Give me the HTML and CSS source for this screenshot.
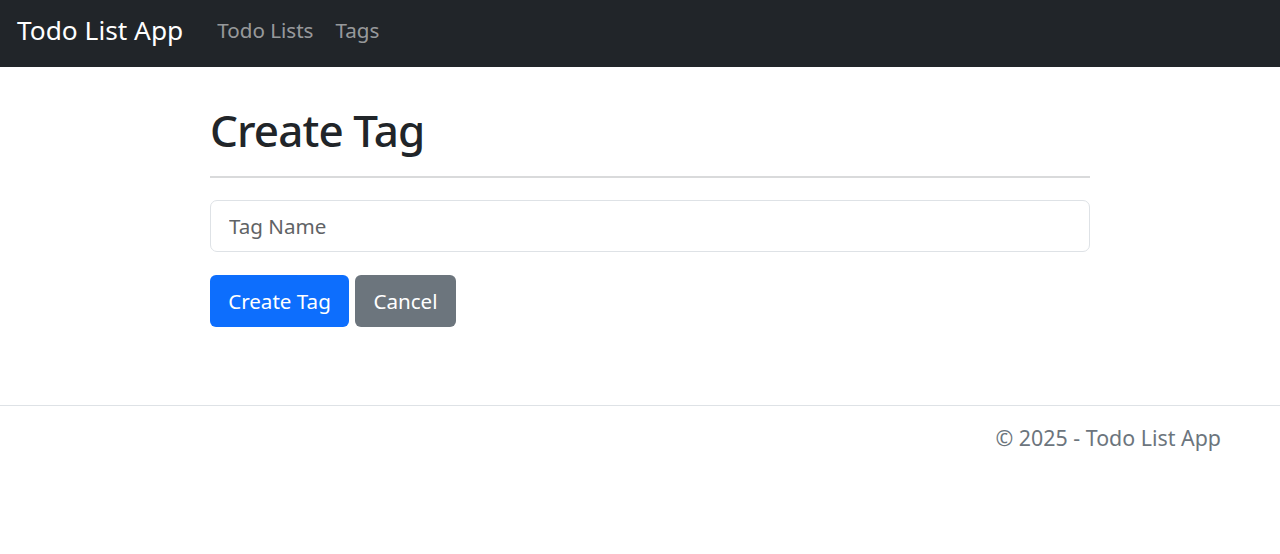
FILE: index.html
```html
<!DOCTYPE html>
<html lang="en">
<head>
<meta charset="utf-8">
<title>Create Tag - Todo List App</title>
<link rel="stylesheet" href="styles.css">
</head>
<body>
<header class="navbar">
  <a class="brand" href="#">Todo List App</a>
  <nav class="nav">
    <a class="nav-link" href="#">Todo Lists</a>
    <a class="nav-link" href="#">Tags</a>
  </nav>
</header>
<main class="container">
  <h1 class="title">Create Tag</h1>
  <hr class="divider">
  <form class="form">
    <input class="input" type="text" placeholder="Tag Name">
    <div class="actions">
      <button class="btn btn-primary" type="button">Create Tag</button>
      <button class="btn btn-secondary" type="button">Cancel</button>
    </div>
  </form>
</main>
<footer class="footer">
  <span class="footer-text">© 2025 - Todo List App</span>
</footer>
</body>
</html>
```

FILE: styles.css
```css
* { box-sizing: border-box; }
html, body { margin: 0; padding: 0; }
body {
  font-family: "Noto Sans", "Open Sans", sans-serif;
  font-size: 19.2px;
  color: #212529;
  background: #fff;
  width: 1280px;
  height: 554px;
  overflow: hidden;
}
.navbar {
  height: 67px;
  background: #212529;
  display: flex;
  align-items: center;
  padding: 0 17px 8px;
}
.brand {
  color: #fff;
  text-decoration: none;
  font-size: 26.3px;
  margin-right: 34px;
}
.nav { display: flex; gap: 22px; }
.nav-link {
  color: rgba(255, 255, 255, 0.55);
  text-decoration: none;
  font-size: 20.6px;
}
.container {
  margin-left: 210px;
  width: 880px;
  height: 338px;
  padding-top: 37px;
}
.title {
  font-size: 44px;
  font-weight: 500;
  letter-spacing: -0.9px;
  line-height: 1.2;
  margin: 0;
}
.divider {
  border: 0;
  border-top: 2px solid #d9dadb;
  margin: 19px 0 22px;
}
.input {
  display: block;
  width: 100%;
  height: 52px;
  border: 1px solid #dee2e6;
  border-radius: 7px;
  padding: 0 18px;
  font-family: inherit;
  font-size: 20.6px;
  color: #212529;
}
.input::placeholder { color: #5f6366; }
.actions { display: flex; gap: 6px; margin-top: 23px; }
.btn {
  height: 52px;
  border: 0;
  border-radius: 6px;
  font-family: inherit;
  font-size: 20.6px;
  color: #fff;
  padding: 0;
}
.btn-primary { background: #0d6efd; width: 139px; }
.btn-secondary { background: #6c757d; width: 101px; }
.footer {
  border-top: 1px solid #dee2e6;
  height: 149px;
  display: flex;
  justify-content: flex-end;
  padding: 17px 59px 0 0;
}
.footer-text { color: #6c757d; font-size: 21.4px; }
```
